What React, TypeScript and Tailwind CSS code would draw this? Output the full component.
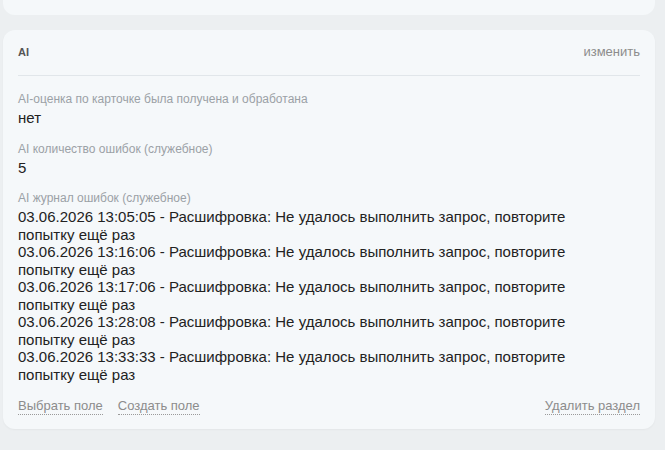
const log = [
  "03.06.2026 13:05:05 - Расшифровка: Не удалось выполнить запрос, повторите попытку ещё раз",
  "03.06.2026 13:16:06 - Расшифровка: Не удалось выполнить запрос, повторите попытку ещё раз",
  "03.06.2026 13:17:06 - Расшифровка: Не удалось выполнить запрос, повторите попытку ещё раз",
  "03.06.2026 13:28:08 - Расшифровка: Не удалось выполнить запрос, повторите попытку ещё раз",
  "03.06.2026 13:33:33 - Расшифровка: Не удалось выполнить запрос, повторите попытку ещё раз",
];

function Field({ label, children }: { label: string; children: React.ReactNode }) {
  return (
    <div className="mt-[14px] first:mt-[9px]">
      <p className="text-[12px] leading-[16px] text-[#9ba1a6]">{label}</p>
      <div className="mt-[2px] text-[15px] leading-[17.5px] text-[#222]">{children}</div>
    </div>
  );
}

function FooterLink({ children }: { children: React.ReactNode }) {
  return (
    <span className="border-b border-dotted border-[#9a9a9a] text-[13px] leading-[16px] text-[#8c8c8c]">
      {children}
    </span>
  );
}

export default function App() {
  return (
    <div
      className="min-h-[450px] w-[665px] bg-[#eceff1] pl-[3px] pr-[10px]"
      style={{ fontFamily: '"Liberation Sans", Arial, sans-serif' }}
    >
      <div className="h-[15px] rounded-b-[12px] bg-[#f5f8fa]" />
      <section className="mt-[15px] rounded-[12px] bg-[#f5f8fa] px-[15px] pt-[14px] pb-[14px] shadow-[0_1px_2px_rgba(0,0,0,0.04)]">
        <div className="flex items-center justify-between pb-[15px] border-b border-[#e1e6ea]">
          <h3 className="text-[11px] font-bold leading-[16px] text-[#555]">AI</h3>
          <span className="text-[13px] leading-[16px] text-[#8c8c8c]">изменить</span>
        </div>
        <div className="pt-[6px]">
          <Field label="AI-оценка по карточке была получена и обработана">нет</Field>
          <Field label="AI количество ошибок (служебное)">5</Field>
          <Field label="AI журнал ошибок (служебное)">
            {log.map((l) => (
              <p key={l} className="pr-[60px]">{l}</p>
            ))}
          </Field>
        </div>
        <div className="mt-[15px] flex items-center justify-between">
          <div className="flex gap-[15px]">
            <FooterLink>Выбрать поле</FooterLink>
            <FooterLink>Создать поле</FooterLink>
          </div>
          <FooterLink>Удалить раздел</FooterLink>
        </div>
      </section>
    </div>
  );
}
